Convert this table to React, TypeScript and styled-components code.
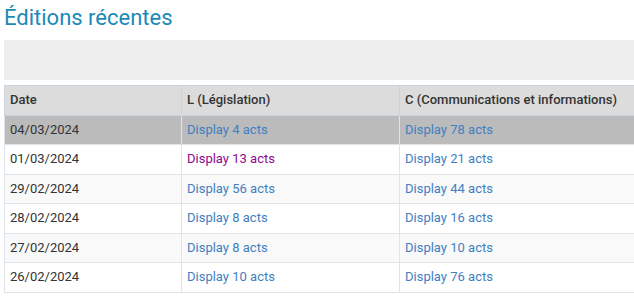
import React from "react";
import styled, { createGlobalStyle } from "styled-components";

const GlobalStyle = createGlobalStyle`
  html, body {
    margin: 0;
    padding: 0;
    background: #fff;
    overflow: hidden;
  }
  body {
    font-family: Roboto, "Liberation Sans", Arial, sans-serif;
    color: #333;
  }
`;

const Page = styled.div`
  padding: 0 0 0 4px;
  width: 680px;
`;

const Title = styled.h2`
  margin: 0;
  padding-top: 4px;
  height: 36px;
  font-size: 22px;
  font-weight: 400;
  line-height: 28px;
  color: #1c8ab7;
`;

const Toolbar = styled.div`
  height: 40px;
  background: #eeeeee;
  margin-bottom: 5px;
`;

const Table = styled.table`
  border-collapse: collapse;
  table-layout: fixed;
  width: 640px;
  font-size: 13px;
  line-height: 1.42857;
`;

const Col = styled.col<{ w: number }>`
  width: ${({ w }) => w}px;
`;

const HeadCell = styled.th`
  text-align: left;
  font-weight: 500;
  color: #333;
  background: #dcdcdc;
  padding: 5px 5px;
  border: 1px solid #c9d3db;
  white-space: nowrap;
`;

const Row = styled.tr<{ tone: "active" | "odd" | "even" }>`
  background: ${({ tone }) =>
    tone === "active" ? "#bbbbbb" : tone === "odd" ? "#f9f9f9" : "#ffffff"};
`;

const Cell = styled.td`
  padding: 5px 5px;
  border: 1px solid #dde4ea;
  border-top: none;
  color: #333;
  white-space: nowrap;
`;

const ActLink = styled.a<{ $visited?: boolean }>`
  color: ${({ $visited }) => ($visited ? "#8e0a8e" : "#3f80c2")};
  text-decoration: none;
`;

const rows = [
  { date: "04/03/2024", l: 4, c: 78 },
  { date: "01/03/2024", l: 13, c: 21, visited: true },
  { date: "29/02/2024", l: 56, c: 44 },
  { date: "28/02/2024", l: 8, c: 16 },
  { date: "27/02/2024", l: 8, c: 10 },
  { date: "26/02/2024", l: 10, c: 76 },
];

export default function App() {
  return (
    <>
      <GlobalStyle />
      <Page>
        <Title>Éditions récentes</Title>
        <Toolbar />
        <Table>
          <colgroup>
            <Col w={177} />
            <Col w={218} />
            <Col w={245} />
          </colgroup>
          <thead>
            <tr>
              <HeadCell>Date</HeadCell>
              <HeadCell>L (Législation)</HeadCell>
              <HeadCell>C (Communications et informations)</HeadCell>
            </tr>
          </thead>
          <tbody>
            {rows.map((r, i) => (
              <Row key={r.date} tone={i === 0 ? "active" : i % 2 === 0 ? "odd" : "even"}>
                <Cell>{r.date}</Cell>
                <Cell>
                  <ActLink href="#" $visited={r.visited}>
                    Display {r.l} acts
                  </ActLink>
                </Cell>
                <Cell>
                  <ActLink href="#">Display {r.c} acts</ActLink>
                </Cell>
              </Row>
            ))}
          </tbody>
        </Table>
      </Page>
    </>
  );
}
